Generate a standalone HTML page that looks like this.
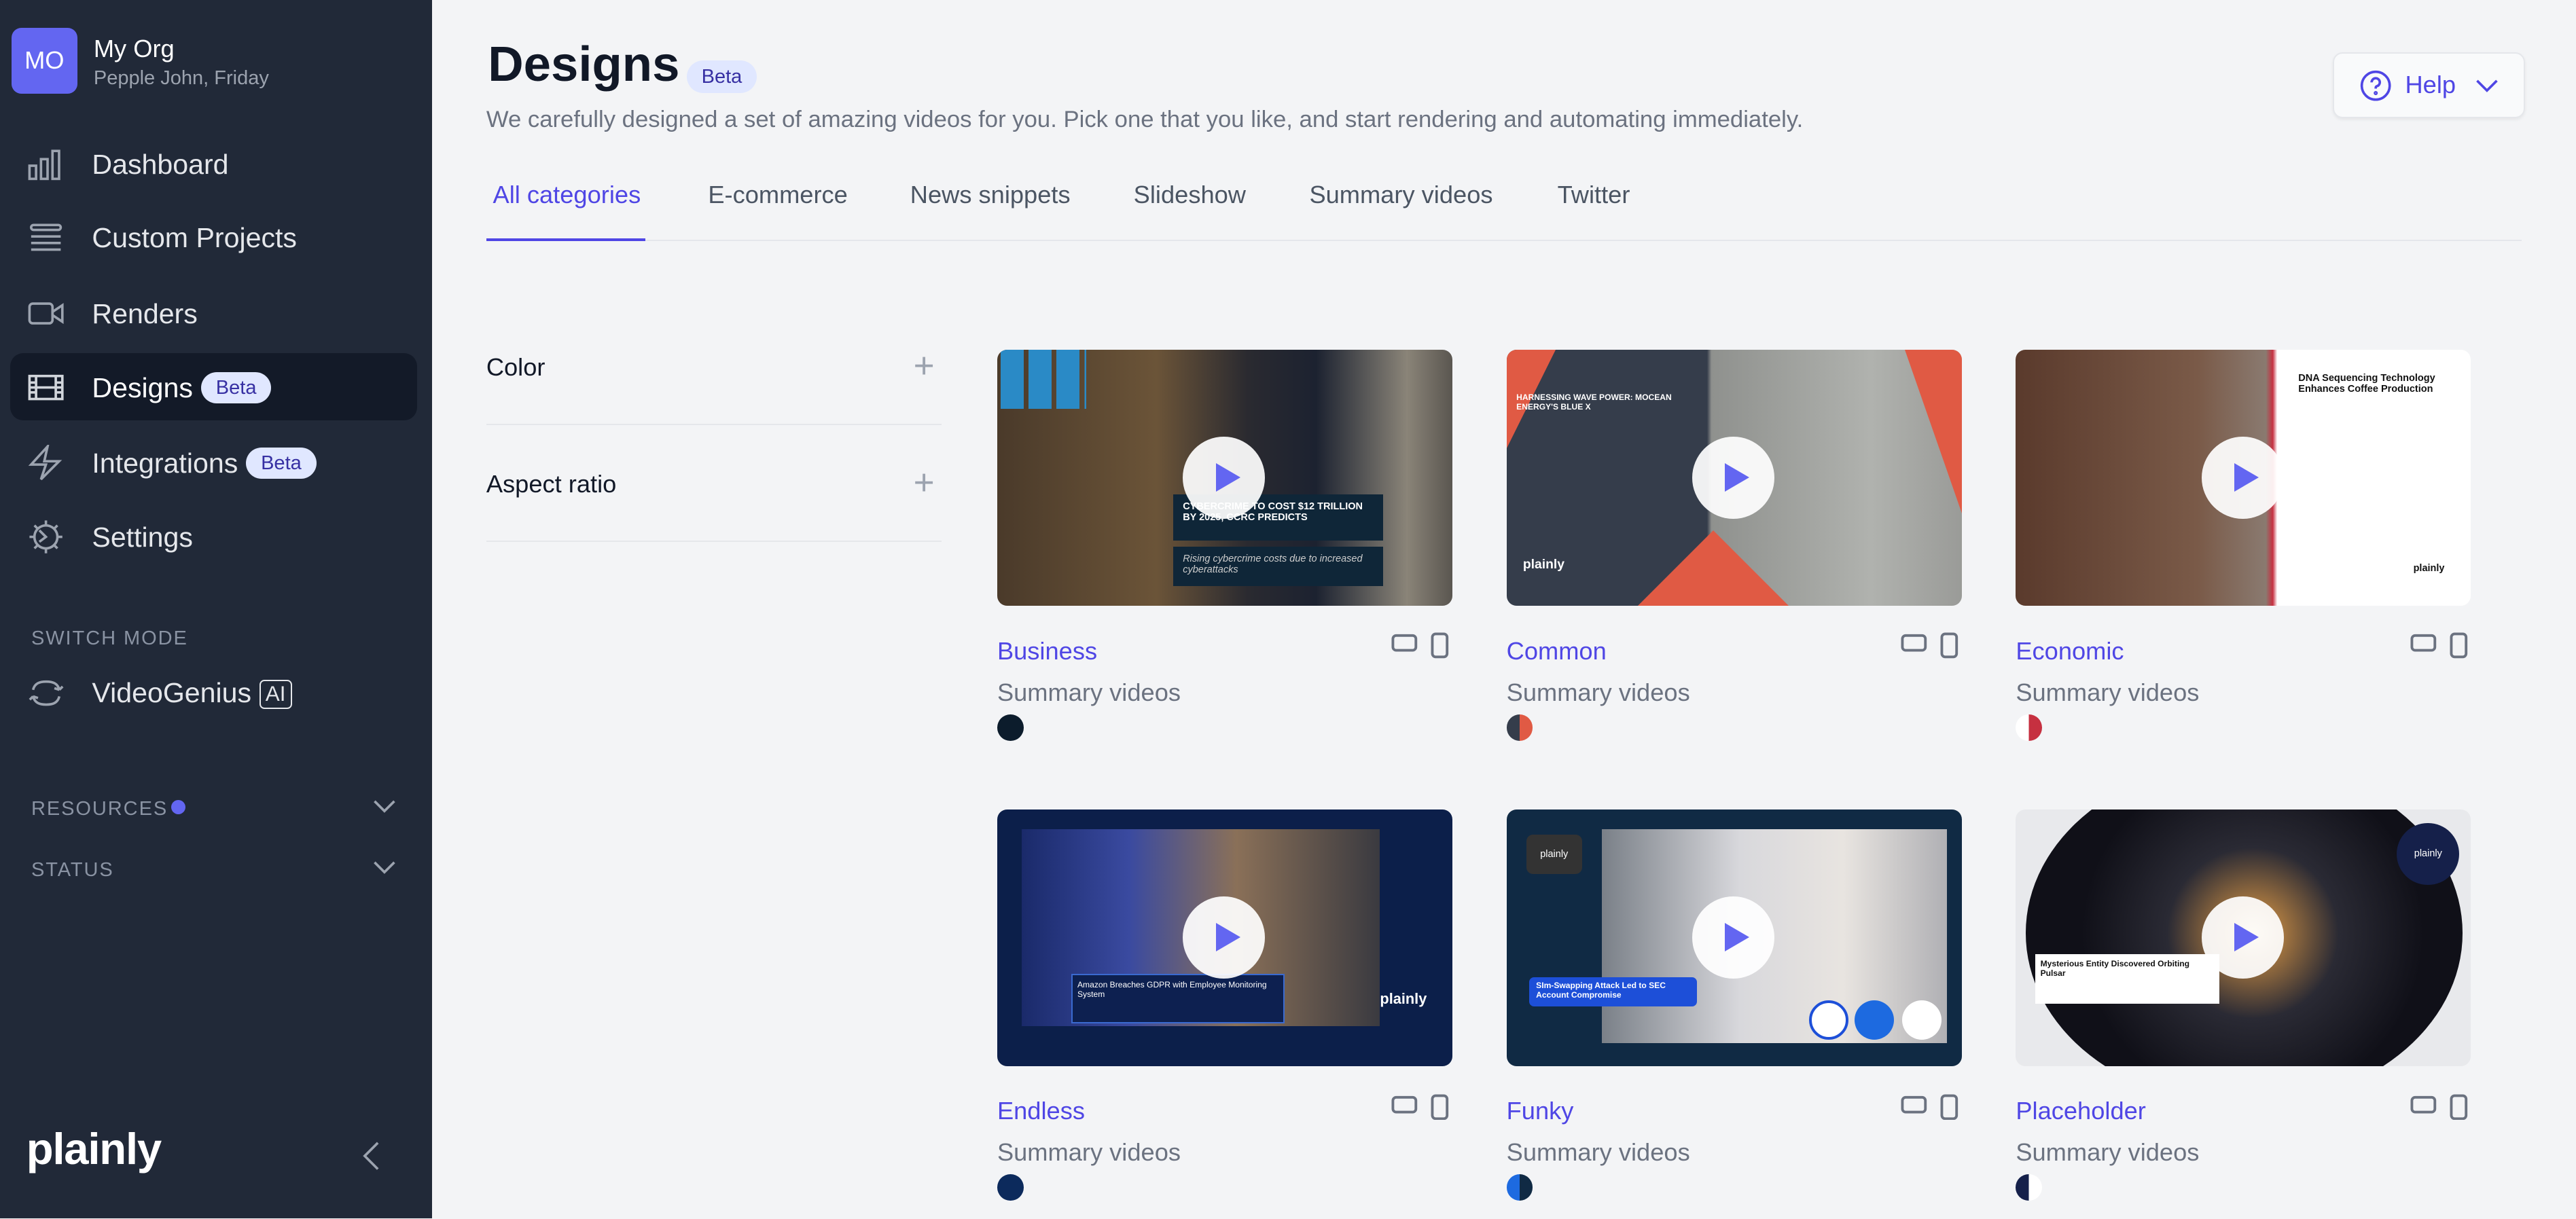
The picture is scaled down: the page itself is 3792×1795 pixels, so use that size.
<!DOCTYPE html>
<html><head><meta charset="utf-8"><style>
*{margin:0;padding:0;box-sizing:border-box}
html,body{width:3792px;height:1795px;overflow:hidden;background:#f3f4f6}
#r{zoom:2.41837;width:1568px;height:742px;position:relative;font-family:"Liberation Sans",sans-serif;background:#f3f4f6;overflow:hidden}
.a{position:absolute}
.sb{left:0;top:0;width:263px;height:742px;background:#212938}
.nav{left:56px;font-size:17px;color:#e5e7eb;line-height:20px}
.ic{left:17px;width:22px;height:22px}
.beta{display:inline-block;background:#e0e7ff;color:#3730a3;font-size:12px;border-radius:10px;padding:2px 9px;vertical-align:2px;margin-left:5px;line-height:15px}
.sec{left:19px;font-size:12px;color:#8a93a3;letter-spacing:.8px}
.tab{top:110px;font-size:15px;color:#4b5563}
.th{width:277px;height:156px;border-radius:6px;overflow:hidden}
.pl{position:absolute;left:113px;top:53px;width:50px;height:50px;border-radius:50%;background:rgba(255,255,255,.92)}
.pl:after{content:"";position:absolute;left:20px;top:16px;border-left:15px solid #6366f1;border-top:9px solid transparent;border-bottom:9px solid transparent}
.t{font-size:15px;color:#4f46e5}
.s{font-size:15px;color:#6b7280}
.sw{width:16px;height:16px;border-radius:50%}
.ri{width:36px;height:16px}
</style></head><body><div id="r">
<div class="a sb"></div>
<div class="a" style="left:7px;top:17px;width:40px;height:40px;background:#6366f1;border-radius:6px;color:#fff;font-size:15px;text-align:center;line-height:40px">MO</div>
<div class="a" style="left:57px;top:21px;font-size:15px;color:#fff">My Org</div>
<div class="a" style="left:57px;top:41px;font-size:12px;color:#9ca3af">Pepple John, Friday</div>
<div class="a" style="left:6px;top:215px;width:248px;height:41px;background:#131a28;border-radius:8px"></div>
<svg class="a ic" style="top:89px" viewBox="0 0 22 22" fill="none" stroke="#9ca3af" stroke-width="1.5"><rect x="1" y="12" width="4" height="8"/><rect x="8" y="8" width="4" height="12"/><rect x="15" y="3" width="4" height="17"/></svg>
<div class="a nav" style="top:90px">Dashboard</div>
<svg class="a ic" style="top:134px" viewBox="0 0 22 22" fill="none" stroke="#9ca3af" stroke-width="1.5"><rect x="2" y="3" width="18" height="3" rx="1.5"/><path d="M2 10h18M2 14h18M2 18h18"/></svg>
<div class="a nav" style="top:135px">Custom Projects</div>
<svg class="a ic" style="top:180px" viewBox="0 0 22 22" fill="none" stroke="#9ca3af" stroke-width="1.5"><rect x="1" y="5" width="14" height="12" rx="2"/><path d="M15 10l6-4v10l-6-4z"/></svg>
<div class="a nav" style="top:181px">Renders</div>
<svg class="a ic" style="top:225px" viewBox="0 0 22 22" fill="none" stroke="#d1d5db" stroke-width="1.5"><rect x="1" y="4" width="20" height="14"/><path d="M5 4v14M17 4v14M1 8h4M1 11h4M1 14h4M17 8h4M17 11h4M17 14h4M5 11h12"/></svg>
<div class="a nav" style="top:226px;color:#fff">Designs<span class="beta">Beta</span></div>
<svg class="a ic" style="top:271px" viewBox="0 0 22 22" fill="none" stroke="#9ca3af" stroke-width="1.5"><path d="M12 1L2 12h9l-3 9 11-11h-9z"/></svg>
<div class="a nav" style="top:272px">Integrations<span class="beta">Beta</span></div>
<svg class="a ic" style="top:316px" viewBox="0 0 22 22" fill="none" stroke="#9ca3af" stroke-width="1.5"><circle cx="11" cy="11" r="7"/><path d="M11 1v3M11 18v3M1 11h3M18 11h3M4 4l2 2M16 16l2 2M4 18l2-2M16 6l2-2M7 7l4 4-4 3"/></svg>
<div class="a nav" style="top:317px">Settings</div>
<div class="a sec" style="top:382px">SWITCH MODE</div>
<svg class="a ic" style="top:411px;left:16px;width:24px" viewBox="0 0 24 22" fill="none" stroke="#9ca3af" stroke-width="1.5"><path d="M4 9c1-4 4-5 8-5s7 1 8 5M20 9l2-2M20 9l-3-1M20 13c-1 4-4 5-8 5s-7-1-8-5M4 13l-2 2M4 13l3 1"/></svg>
<div class="a nav" style="top:412px">VideoGenius <span style="display:inline-block;border:1.2px solid #e5e7eb;border-radius:3px;font-size:13px;padding:0 3px;line-height:16px;vertical-align:1px">AI</span></div>
<div class="a sec" style="top:486px">RESOURCES</div>
<div class="a" style="left:104px;top:487px;width:9px;height:9px;border-radius:50%;background:#6366f1"></div>
<div class="a sec" style="top:523px">STATUS</div>
<svg class="a" style="left:227px;top:486px" width="14" height="10" viewBox="0 0 14 10" fill="none" stroke="#9ca3af" stroke-width="1.5"><path d="M1 2l6 6 6-6"/></svg>
<svg class="a" style="left:227px;top:523px" width="14" height="10" viewBox="0 0 14 10" fill="none" stroke="#9ca3af" stroke-width="1.5"><path d="M1 2l6 6 6-6"/></svg>
<div class="a" style="left:16px;top:684px;font-size:27px;font-weight:bold;color:#fff;letter-spacing:-.5px">plainly</div>
<svg class="a" style="left:220px;top:694px" width="12" height="20" viewBox="0 0 12 20" fill="none" stroke="#9ca3af" stroke-width="1.5"><path d="M10 2L2 10l8 8"/></svg>

<div class="a" style="left:297px;top:22px;font-size:30px;font-weight:bold;color:#111827">Designs</div>
<div class="a" style="left:418px;top:37px;background:#e0e7ff;color:#3730a3;font-size:12px;border-radius:10px;padding:3px 9px">Beta</div>
<div class="a" style="left:296px;top:65px;font-size:14.35px;color:#6b7280">We carefully designed a set of amazing videos for you. Pick one that you like, and start rendering and automating immediately.</div>
<div class="a" style="left:1420px;top:32px;width:117px;height:40px;background:#f9fafb;border:1px solid #e5e7eb;border-radius:6px;box-shadow:0 1px 2px rgba(0,0,0,.06)"></div>
<svg class="a" style="left:1436px;top:42px" width="20" height="20" viewBox="0 0 20 20" fill="none" stroke="#4f46e5" stroke-width="1.5"><circle cx="10" cy="10" r="8.5"/><path d="M7.5 8a2.5 2.5 0 1 1 3 2.4c-.5.2-.5.6-.5 1.4"/><circle cx="10" cy="14.5" r=".5"/></svg>
<div class="a" style="left:1464px;top:43px;font-size:15px;color:#4f46e5">Help</div>
<svg class="a" style="left:1507px;top:47px" width="14" height="10" viewBox="0 0 14 10" fill="none" stroke="#4f46e5" stroke-width="1.5"><path d="M1 2l6 6 6-6"/></svg>

<div class="a tab" style="left:300px;color:#4f46e5">All categories</div>
<div class="a tab" style="left:431px">E-commerce</div>
<div class="a tab" style="left:554px">News snippets</div>
<div class="a tab" style="left:690px">Slideshow</div>
<div class="a tab" style="left:797px">Summary videos</div>
<div class="a tab" style="left:948px">Twitter</div>
<div class="a" style="left:296px;top:146px;width:1239px;height:1px;background:#e5e7eb"></div>
<div class="a" style="left:296px;top:145px;width:97px;height:2px;background:#4f46e5"></div>

<div class="a" style="left:296px;top:215px;font-size:15px;color:#111827">Color</div>
<div class="a" style="left:556px;top:210px;font-size:22px;color:#9ca3af;font-weight:300">+</div>
<div class="a" style="left:296px;top:258px;width:277px;height:1px;background:#e5e7eb"></div>
<div class="a" style="left:296px;top:286px;font-size:15px;color:#111827">Aspect ratio</div>
<div class="a" style="left:556px;top:281px;font-size:22px;color:#9ca3af;font-weight:300">+</div>
<div class="a" style="left:296px;top:329px;width:277px;height:1px;background:#e5e7eb"></div>

<div class="a th" style="left:607px;top:213px;background:linear-gradient(90deg,#4a3a2a,#6b5438 35%,#2a2a30 55%,#1c2230 70%,#8a8478 90%,#5a5650)">
<div class="a" style="left:2px;top:0;width:52px;height:36px;background:repeating-linear-gradient(90deg,#2a8ac6 0 14px,transparent 14px 17px)"></div>
<div class="a" style="left:107px;top:88px;width:128px;height:28px;background:#0f2638"><div style="font-size:6px;color:#fff;font-weight:bold;padding:4px 6px">CYBERCRIME TO COST $12 TRILLION BY 2025, CCRC PREDICTS</div></div>
<div class="a" style="left:107px;top:120px;width:128px;height:24px;background:#0f2638;font-size:6px;color:#ccc;padding:4px 6px;font-style:italic">Rising cybercrime costs due to increased cyberattacks</div>
<div class="pl"></div></div>
<div class="a th" style="left:917px;top:213px;background:linear-gradient(90deg,#353d4b 0 44%,#8f918e 45%,#b0b2ae 80%,#9a9b98)">
<div class="a" style="left:0;top:0;width:0;height:0;border-top:60px solid #e05a44;border-right:30px solid transparent"></div>
<div class="a" style="right:0;top:0;width:0;height:0;border-top:100px solid #e05a44;border-left:35px solid transparent"></div>
<div class="a" style="left:80px;top:110px;width:0;height:0;border-bottom:46px solid #e05a44;border-left:46px solid transparent;border-right:46px solid transparent"></div>
<div class="a" style="left:6px;top:26px;width:110px;font-size:5px;color:#fff;font-weight:bold">HARNESSING WAVE POWER: MOCEAN ENERGY'S BLUE X</div>
<div class="a" style="left:10px;top:126px;font-size:8px;color:#fff;font-weight:bold">plainly</div>
<div class="pl"></div></div>
<div class="a th" style="left:1227px;top:213px;background:linear-gradient(90deg,#5a3a2c,#7a5a48 40%,#8a7a70 55%,#c63040 56.5%,#fff 57.5%)">
<div class="a" style="left:172px;top:14px;width:95px;font-size:6px;color:#111;font-weight:bold">DNA Sequencing Technology Enhances Coffee Production</div>
<div class="a" style="left:242px;top:130px;font-size:6px;color:#111;font-weight:bold">plainly</div>
<div class="pl"></div></div>

<div class="a t" style="left:607px;top:388px">Business</div><div class="a t" style="left:917px;top:388px">Common</div><div class="a t" style="left:1227px;top:388px">Economic</div>
<div class="a s" style="left:607px;top:413px">Summary videos</div><div class="a s" style="left:917px;top:413px">Summary videos</div><div class="a s" style="left:1227px;top:413px">Summary videos</div>
<div class="a sw" style="left:607px;top:435px;background:#0c1c2c"></div>
<div class="a sw" style="left:917px;top:435px;background:linear-gradient(90deg,#353d4b 50%,#e05a44 50%)"></div>
<div class="a sw" style="left:1227px;top:435px;background:linear-gradient(90deg,#fff 50%,#c63040 50%)"></div>

<div class="a th" style="left:607px;top:493px;background:#0c1f4a">
<div class="a" style="left:15px;top:12px;width:218px;height:120px;background:linear-gradient(90deg,#1a2a6a,#3a4aa0 30%,#8a7058 60%,#3a3a40)"></div>
<div class="a" style="left:45px;top:100px;width:130px;height:30px;background:#0d2050;border:1px solid #3a6ad0;font-size:5px;color:#fff;padding:3px">Amazon Breaches GDPR with Employee Monitoring System</div>
<div class="a" style="left:233px;top:110px;font-size:9px;color:#fff;font-weight:bold">plainly</div>
<div class="pl"></div></div>
<div class="a th" style="left:917px;top:493px;background:#102a44">
<div class="a" style="left:58px;top:12px;width:210px;height:130px;background:linear-gradient(90deg,#7a8088,#d8d8dc 40%,#e8e4e0 70%,#b0b0b4)"></div>
<div class="a" style="left:12px;top:15px;width:34px;height:24px;background:#333;border-radius:4px;font-size:6px;color:#fff;text-align:center;line-height:24px">plainly</div>
<div class="a" style="left:14px;top:102px;width:102px;height:18px;background:#1d4fd8;border-radius:3px;font-size:5px;color:#fff;padding:2px 4px;font-weight:bold">SIm-Swapping Attack Led to SEC Account Compromise</div>
<div class="a sw" style="left:184px;top:116px;width:24px;height:24px;background:#fff;border:2px solid #1d4fd8"></div>
<div class="a sw" style="left:212px;top:116px;width:24px;height:24px;background:#1d6ae0"></div>
<div class="a sw" style="left:241px;top:116px;width:24px;height:24px;background:#fff"></div>
<div class="pl"></div></div>
<div class="a th" style="left:1227px;top:493px;background:#e8e9ec">
<div class="a" style="left:6px;top:-30px;width:266px;height:210px;border-radius:50%;background:radial-gradient(circle at 52% 50%,#e8c890 0,#a87840 10%,#2a2a34 30%,#101018 60%)"></div>
<div class="a" style="left:12px;top:88px;width:112px;height:30px;background:#fff;font-size:5px;color:#111;padding:3px;font-weight:bold">Mysterious Entity Discovered Orbiting Pulsar</div>
<div class="a sw" style="left:232px;top:8px;width:38px;height:38px;background:#15204a;font-size:6px;color:#fff;text-align:center;line-height:38px">plainly</div>
<div class="pl"></div></div>

<div class="a t" style="left:607px;top:668px">Endless</div><div class="a t" style="left:917px;top:668px">Funky</div><div class="a t" style="left:1227px;top:668px">Placeholder</div>
<div class="a s" style="left:607px;top:693px">Summary videos</div><div class="a s" style="left:917px;top:693px">Summary videos</div><div class="a s" style="left:1227px;top:693px">Summary videos</div>
<div class="a sw" style="left:607px;top:715px;background:#0c2a5c"></div>
<div class="a sw" style="left:917px;top:715px;background:linear-gradient(90deg,#1d6ae0 50%,#102a44 50%)"></div>
<div class="a sw" style="left:1227px;top:715px;background:linear-gradient(90deg,#15204a 50%,#fff 50%)"></div>

<svg class="a ri" style="left:847px;top:385px" viewBox="0 0 36 16" fill="none" stroke="#6b7280" stroke-width="1.6"><rect x="1" y="2" width="14" height="9" rx="2"/><rect x="25" y="1" width="9" height="14" rx="2"/></svg>
<svg class="a ri" style="left:1157px;top:385px" viewBox="0 0 36 16" fill="none" stroke="#6b7280" stroke-width="1.6"><rect x="1" y="2" width="14" height="9" rx="2"/><rect x="25" y="1" width="9" height="14" rx="2"/></svg>
<svg class="a ri" style="left:1467px;top:385px" viewBox="0 0 36 16" fill="none" stroke="#6b7280" stroke-width="1.6"><rect x="1" y="2" width="14" height="9" rx="2"/><rect x="25" y="1" width="9" height="14" rx="2"/></svg>
<svg class="a ri" style="left:847px;top:666px" viewBox="0 0 36 16" fill="none" stroke="#6b7280" stroke-width="1.6"><rect x="1" y="2" width="14" height="9" rx="2"/><rect x="25" y="1" width="9" height="14" rx="2"/></svg>
<svg class="a ri" style="left:1157px;top:666px" viewBox="0 0 36 16" fill="none" stroke="#6b7280" stroke-width="1.6"><rect x="1" y="2" width="14" height="9" rx="2"/><rect x="25" y="1" width="9" height="14" rx="2"/></svg>
<svg class="a ri" style="left:1467px;top:666px" viewBox="0 0 36 16" fill="none" stroke="#6b7280" stroke-width="1.6"><rect x="1" y="2" width="14" height="9" rx="2"/><rect x="25" y="1" width="9" height="14" rx="2"/></svg>
</div></body></html>
